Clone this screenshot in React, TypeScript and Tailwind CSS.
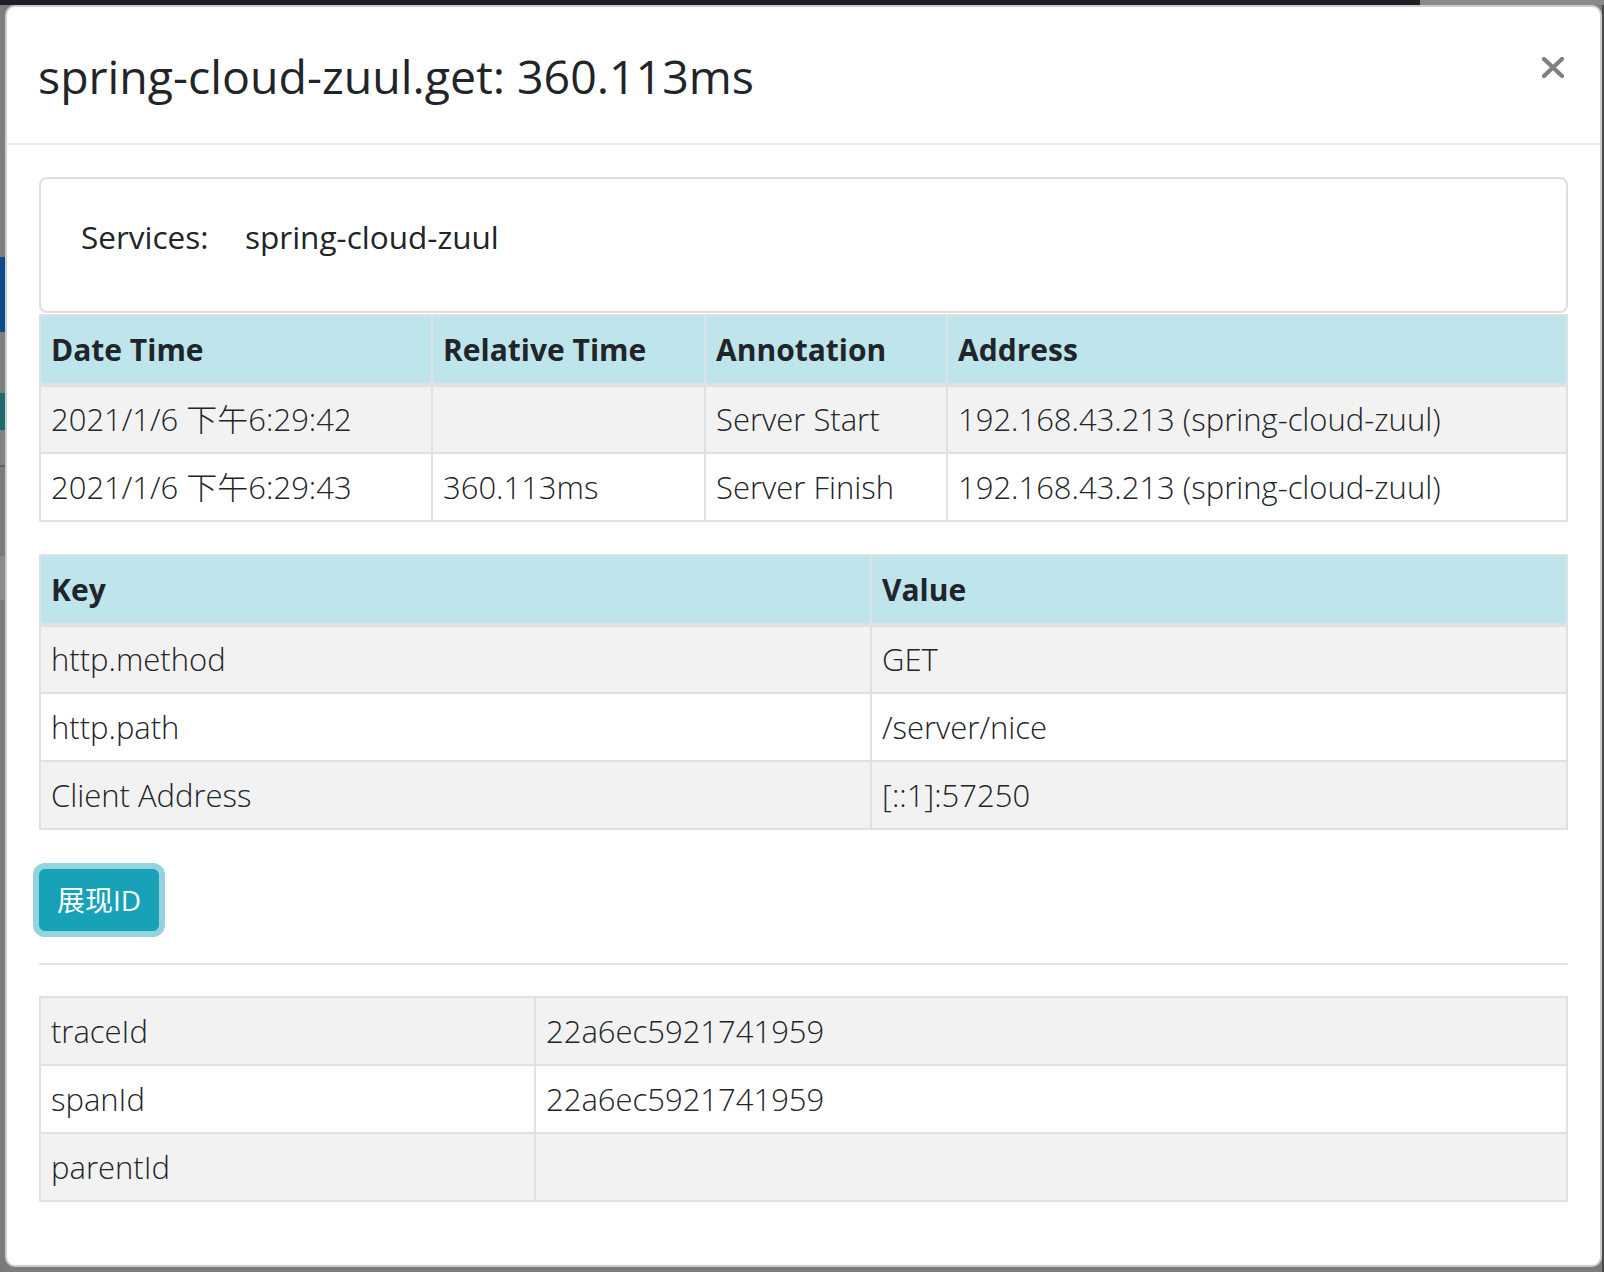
import React from 'react';

const font = "font-['Open_Sans','Noto_Sans_CJK_SC',sans-serif]";

const timeline = [
  { date: '2021/1/6 下午6:29:42', rel: '', ann: 'Server Start', addr: '192.168.43.213 (spring-cloud-zuul)' },
  { date: '2021/1/6 下午6:29:43', rel: '360.113ms', ann: 'Server Finish', addr: '192.168.43.213 (spring-cloud-zuul)' },
];

const tags = [
  { key: 'http.method', value: 'GET' },
  { key: 'http.path', value: '/server/nice' },
  { key: 'Client Address', value: '[::1]:57250' },
];

const ids = [
  { key: 'traceId', value: '22a6ec5921741959' },
  { key: 'spanId', value: '22a6ec5921741959' },
  { key: 'parentId', value: '' },
];

const th = 'h-[70px] border-2 border-b-4 border-[#dee2e6] px-[10px] text-left align-middle font-bold text-[30px] leading-[45px]';
const td = 'h-[68px] border-2 border-[#dee2e6] px-[10px] align-middle font-light text-[31px] leading-[45px]';

export default function App() {
  return (
    <div className={`w-[1604px] h-[1272px] bg-[#7c7c7c] flex flex-col overflow-hidden ${font} text-[#212529]`}>
      {/* page behind the backdrop */}
      <div className="h-[5px] shrink-0 flex">
        <div className="w-[1420px] bg-[#1d2024]" />
        <div className="flex-1 bg-[#8a8a8a]" />
      </div>
      <div className="flex flex-1">
        <div className="w-[5px] shrink-0 flex flex-col">
          <div className="h-[252px] bg-[#7e7e7e]" />
          <div className="h-[75px] bg-[#0b4a8b]" />
          <div className="h-[61px] bg-[#7f7f7f]" />
          <div className="h-[37px] bg-[#1b6a6f]" />
          <div className="h-[35px] bg-[#808080]" />
          <div className="h-[2px] bg-[#5e5e5e]" />
          <div className="h-[89px] bg-[#7a7a7a]" />
          <div className="h-[44px] bg-[#8b8b8b]" />
          <div className="flex-1 bg-[#7a7a7a]" />
        </div>

        {/* modal */}
        <div className="w-[1597px] h-[1262px] shrink-0 bg-white border-2 border-black/20 rounded-[10px] flex flex-col overflow-hidden">
          <div className="h-[138px] shrink-0 border-b-2 border-[#e6e9ec] flex items-center justify-between pl-[31px] pr-[34px]">
            <h4 className="text-[46.5px] font-normal leading-[72px] pt-[2px]">spring-cloud-zuul.get: 360.113ms</h4>
            <button className="w-[26px] h-[26px] flex items-center justify-center mb-[16px]">
              <svg width="22" height="21" viewBox="0 0 22 21">
                <path d="M2 2 L20 19 M20 2 L2 19" stroke="#808080" strokeWidth="4.2" strokeLinecap="square" />
              </svg>
            </button>
          </div>

          <div className="px-[32px] pt-[32px] flex flex-col">
            <div className="h-[136px] border-2 border-black/[0.125] rounded-[8px] px-[40px] pt-[35px] flex items-start text-[31.5px] leading-[45px]">
              <span className="w-[164px]">Services:</span>
              <span>spring-cloud-zuul</span>
            </div>

            <table className="w-full table-fixed border-collapse mt-[1px]">
              <colgroup>
                <col className="w-[392px]" />
                <col className="w-[273px]" />
                <col className="w-[242px]" />
                <col />
              </colgroup>
              <thead>
                <tr className="bg-[#bee5eb]">
                  <th className={th}>Date Time</th>
                  <th className={th}>Relative Time</th>
                  <th className={th}>Annotation</th>
                  <th className={th}>Address</th>
                </tr>
              </thead>
              <tbody>
                {timeline.map((r, i) => (
                  <tr key={i} className={i % 2 === 0 ? 'bg-[#f2f2f2]' : 'bg-white'}>
                    <td className={td}>{r.date}</td>
                    <td className={td}>{r.rel}</td>
                    <td className={td}>{r.ann}</td>
                    <td className={td}>{r.addr}</td>
                  </tr>
                ))}
              </tbody>
            </table>

            <table className="w-full table-fixed border-collapse mt-[32px]">
              <colgroup>
                <col className="w-[831px]" />
                <col />
              </colgroup>
              <thead>
                <tr className="bg-[#bee5eb]">
                  <th className={th}>Key</th>
                  <th className={th}>Value</th>
                </tr>
              </thead>
              <tbody>
                {tags.map((r, i) => (
                  <tr key={r.key} className={i % 2 === 0 ? 'bg-[#f2f2f2]' : 'bg-white'}>
                    <td className={td}>{r.key}</td>
                    <td className={td}>{r.value}</td>
                  </tr>
                ))}
              </tbody>
            </table>

            <div className="mt-[39px] flex">
              <button className="h-[62px] px-[16px] rounded-[6px] bg-[#17a2b8] border-2 border-[#17a2b8] text-white text-[28px] leading-[42px] shadow-[0_0_0_6px_#92d3dd]">
                展现ID
              </button>
            </div>

            <hr className="mt-[32px] border-0 border-t-2 border-black/10" />

            <table className="w-full table-fixed border-collapse mt-[31px]">
              <colgroup>
                <col className="w-[495px]" />
                <col />
              </colgroup>
              <tbody>
                {ids.map((r, i) => (
                  <tr key={r.key} className={i % 2 === 0 ? 'bg-[#f2f2f2]' : 'bg-white'}>
                    <td className={td}>{r.key}</td>
                    <td className={td}>{r.value}</td>
                  </tr>
                ))}
              </tbody>
            </table>
          </div>
        </div>

        <div className="flex-1 bg-[#4a4a4a]" />
      </div>
    </div>
  );
}
